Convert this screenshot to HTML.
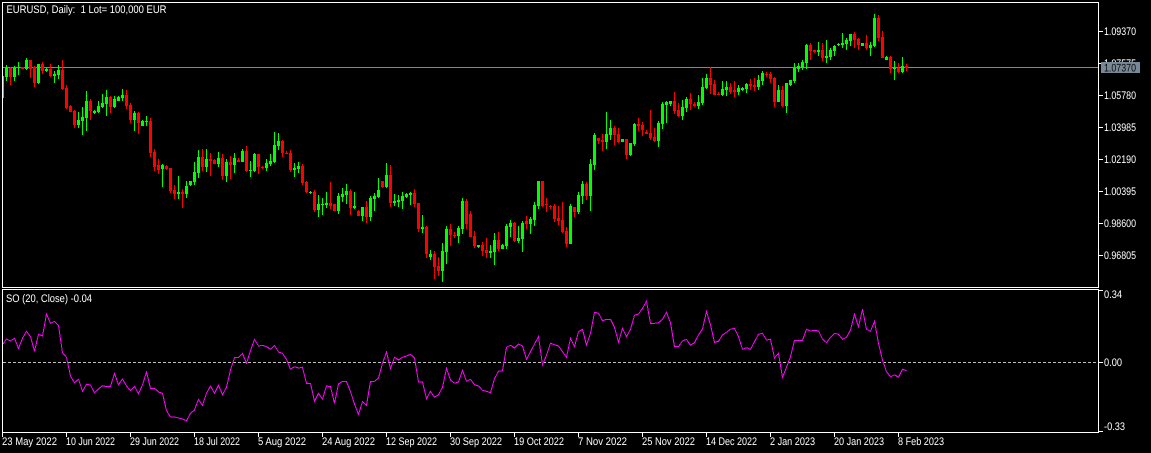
<!DOCTYPE html>
<html lang="en">
<head>
<meta charset="utf-8">
<title>EURUSD Daily</title>
<style>
html,body{margin:0;padding:0;background:#000;width:1151px;height:453px;overflow:hidden}
svg{display:block}
text{font-family:"Liberation Sans",Arial,sans-serif;font-size:11px;fill:#fff;white-space:pre;text-rendering:geometricPrecision}
</style>
</head>
<body>
<svg xmlns="http://www.w3.org/2000/svg" width="1151" height="453" viewBox="0 0 1151 453">
<rect width="1151" height="453" fill="#000"/>
<rect x="3" y="67" width="1095" height="1" fill="#778899"/>
<path id="gw" fill="#00ff00" shape-rendering="crispEdges"/>
<path id="rw" fill="#ff0000" shape-rendering="crispEdges"/>
<line x1="3" y1="362.5" x2="1098" y2="362.5" stroke="#c0c0c0" stroke-width="1" stroke-dasharray="3 2" shape-rendering="crispEdges"/>
<polyline id="so" fill="none" stroke="#ff00ff" stroke-width="1" shape-rendering="crispEdges" points=""/>
<g fill="#fff" shape-rendering="crispEdges">
<rect x="2" y="2" width="1097" height="1"/>
<rect x="2" y="287" width="1097" height="1"/>
<rect x="2" y="2" width="1" height="286"/>
<rect x="1098" y="2" width="1" height="286"/>
<rect x="2" y="289" width="1097" height="1"/>
<rect x="2" y="432" width="1097" height="1"/>
<rect x="2" y="289" width="1" height="144"/>
<rect x="1098" y="289" width="1" height="144"/>
<rect x="1099" y="31" width="4" height="1"/>
<rect x="1099" y="63" width="4" height="1"/>
<rect x="1099" y="95" width="4" height="1"/>
<rect x="1099" y="127" width="4" height="1"/>
<rect x="1099" y="159" width="4" height="1"/>
<rect x="1099" y="191" width="4" height="1"/>
<rect x="1099" y="223" width="4" height="1"/>
<rect x="1099" y="255" width="4" height="1"/>
<rect x="1099" y="290" width="4" height="1"/>
<rect x="1099" y="362" width="4" height="1"/>
<rect x="1099" y="431" width="4" height="1"/>
<rect x="2" y="433" width="1" height="4"/>
<rect x="66" y="433" width="1" height="4"/>
<rect x="130" y="433" width="1" height="4"/>
<rect x="194" y="433" width="1" height="4"/>
<rect x="258" y="433" width="1" height="4"/>
<rect x="322" y="433" width="1" height="4"/>
<rect x="386" y="433" width="1" height="4"/>
<rect x="450" y="433" width="1" height="4"/>
<rect x="514" y="433" width="1" height="4"/>
<rect x="578" y="433" width="1" height="4"/>
<rect x="642" y="433" width="1" height="4"/>
<rect x="706" y="433" width="1" height="4"/>
<rect x="770" y="433" width="1" height="4"/>
<rect x="834" y="433" width="1" height="4"/>
<rect x="898" y="433" width="1" height="4"/>
</g>
<text x="6.5" y="13" textLength="160" lengthAdjust="spacingAndGlyphs" xml:space="preserve">EURUSD, Daily:  1 Lot= 100,000 EUR</text>
<text x="6" y="302" textLength="86" lengthAdjust="spacingAndGlyphs">SO (20, Close) -0.04</text>
<g>
<text x="1104" y="35" textLength="32" lengthAdjust="spacingAndGlyphs">1.09370</text>
<text x="1104" y="67" textLength="32" lengthAdjust="spacingAndGlyphs">1.07575</text>
<text x="1104" y="99" textLength="32" lengthAdjust="spacingAndGlyphs">1.05780</text>
<text x="1104" y="131" textLength="32" lengthAdjust="spacingAndGlyphs">1.03985</text>
<text x="1104" y="163" textLength="32" lengthAdjust="spacingAndGlyphs">1.02190</text>
<text x="1104" y="195" textLength="32" lengthAdjust="spacingAndGlyphs">1.00395</text>
<text x="1104" y="227" textLength="32" lengthAdjust="spacingAndGlyphs">0.98600</text>
<text x="1104" y="259" textLength="32" lengthAdjust="spacingAndGlyphs">0.96805</text>
<text x="1104" y="298" textLength="18" lengthAdjust="spacingAndGlyphs">0.34</text>
<text x="1104" y="366" textLength="18" lengthAdjust="spacingAndGlyphs">0.00</text>
<text x="1104" y="430" textLength="21" lengthAdjust="spacingAndGlyphs">-0.33</text>
</g>
<rect x="1101" y="62" width="39" height="11" fill="#778899" shape-rendering="crispEdges"/>
<text x="1104" y="71.5" textLength="32" lengthAdjust="spacingAndGlyphs" style="fill:#0c0c0c">1.07370</text>
<g>
<text x="2" y="445" textLength="55" lengthAdjust="spacingAndGlyphs">23 May 2022</text>
<text x="66" y="445" textLength="49" lengthAdjust="spacingAndGlyphs">10 Jun 2022</text>
<text x="130" y="445" textLength="49" lengthAdjust="spacingAndGlyphs">29 Jun 2022</text>
<text x="194" y="445" textLength="46" lengthAdjust="spacingAndGlyphs">18 Jul 2022</text>
<text x="258" y="445" textLength="48" lengthAdjust="spacingAndGlyphs">5 Aug 2022</text>
<text x="322" y="445" textLength="53" lengthAdjust="spacingAndGlyphs">24 Aug 2022</text>
<text x="386" y="445" textLength="51" lengthAdjust="spacingAndGlyphs">12 Sep 2022</text>
<text x="450" y="445" textLength="52" lengthAdjust="spacingAndGlyphs">30 Sep 2022</text>
<text x="514" y="445" textLength="50" lengthAdjust="spacingAndGlyphs">19 Oct 2022</text>
<text x="578" y="445" textLength="49" lengthAdjust="spacingAndGlyphs">7 Nov 2022</text>
<text x="642" y="445" textLength="53" lengthAdjust="spacingAndGlyphs">25 Nov 2022</text>
<text x="706" y="445" textLength="51" lengthAdjust="spacingAndGlyphs">14 Dec 2022</text>
<text x="770" y="445" textLength="45" lengthAdjust="spacingAndGlyphs">2 Jan 2023</text>
<text x="834" y="445" textLength="50" lengthAdjust="spacingAndGlyphs">20 Jan 2023</text>
<text x="898" y="445" textLength="46" lengthAdjust="spacingAndGlyphs">8 Feb 2023</text>
</g>
</svg>
<script>
(function(){
var segs=[
[6,0,"g196,204,231,243 r201,204,231,255 g198,204,231,243 g186,201,205,225 r201,201,207,207 g174,180,207,210 r180,180,207,234 r198,201,249,261 g192,192,249,252 r186,192,213,222 g204,207,213,216 r192,207,228,231 g213,222,228,249 g195,210,225,237 r180,210,267,270 r255,264,324,327 r315,318,336,336 r330,333,375,384 g336,360,375,384 g321,351,363,405 g273,303,354,393 r297,303,333,360 g330,333,339,342 g303,318,336,339 g282,309,321,324 g270,291,312,348 r288,291,321,339 g288,297,321,324 g288,291,303,303 g267,285,294,303 r270,285,318,327 r309,315,360,369 g333,339,360,393 r336,339,369,402 g360,363,378,378 g348,363,366,378 r354,363,459,471"],
[154,120,"r87,96,141,153 r117,135,150,162 g132,135,147,201 r135,138,147,150 r144,144,213,219 r195,210,222,237 g168,216,222,237 r207,216,222,264 g183,198,222,234 g183,183,195,198 g126,156,186,195 g90,111,159,174 r87,111,141,153 g87,117,141,156 r99,117,123,168 r117,120,132,132 g96,114,132,141 r102,114,168,180 g117,126,168,186 r108,126,135,177 g99,114,135,159 r114,120,126,126 g87,93,126,126 r78,93,153,156 g123,150,153,171 g99,102,153,156 r102,102,141,162 r138,141,144,148 g117,129,144,153 g102,123,132,138 g36,75,126,129 g39,63,78,90 r60,63,99,111 r93,99,102,102 r90,99,150,156 g129,144,150,171 g126,138,147,159"],
[302,100,"r192,198,249,255 r243,246,276,279 g273,276,279,282 r270,276,330,336 g285,312,330,351 g294,312,315,345 g276,309,315,324 r246,309,318,327 r312,312,333,333 g279,288,333,342 g264,282,291,306 g252,273,285,312 r267,273,324,345 g276,318,324,327 r330,333,348,348 g321,321,348,363 r303,321,351,369 g288,294,351,363 g279,288,297,333 g234,270,291,294 r243,243,261,264 g189,225,261,264 r195,225,309,321 g282,303,309,318 g285,300,306,321 g276,288,303,327 g279,282,291,294 g276,279,285,315 r267,279,312,321 r309,309,387,396 g345,381,387,399 r378,381,462,474 g450,462,471,480 r453,462,501,537 r471,498,513,528 g429,453,513,546 g378,387,456,492 r372,387,405,438 r396,405,408,414 g378,384,408,429 g294,303,387,402 r297,303,372,387 r333,342,411,411 r393,408,438,444 g435,435,441,444 r426,435,453,468 r414,450,459,474 g435,453,459,474 g399,420,456,495 r396,420,447,453 g432,435,447,447 g372,378,438,447 g360,369,381,411 r366,369,423,426 g378,414,423,429 g363,369,417,456 r348,363,372,387 g351,357,372,402 g306,315,360,378 g243,243,318,327 r243,243,318,321 r294,312,315,336 r315,318,321,327 r312,318,357,366 r318,354,363,375 r306,360,396,399 r381,393,432,441 g312,318,432,432 r321,321,336,351 g276,285,336,342 g243,252,288,312 r246,252,288,300 g177,192,288,333 g99,105,195,210 r114,114,123,132"],
[602,0,"r402,420,426,453 g336,402,426,447 g360,384,405,420 r378,384,405,435 r384,402,426,429 g417,417,426,426 r417,417,465,477 g429,429,465,468 g369,372,432,438 r354,372,378,393 r366,375,390,408 r390,396,402,402 r330,399,414,420 r384,411,423,426 g363,369,423,441 g306,312,372,387 g303,306,315,369 g303,303,312,318 r276,303,333,342 r309,330,348,351 g300,321,348,360 g291,297,324,336 r279,297,312,330 r306,312,318,321 g285,306,318,327 g234,261,309,315 g222,234,264,267 r201,234,255,282 r240,252,285,285 r276,282,285,285 g243,267,285,288 g243,261,270,288 r249,261,276,282 r243,270,276,291 g255,264,276,285 g261,264,270,273 g249,252,267,279 r237,252,258,270 r234,255,261,273 g225,240,261,270 g213,219,243,255 r216,222,225,231 r216,222,237,249 r231,234,306,321 g255,270,306,306 r258,270,318,321 g249,249,318,339 g240,240,255,258 g189,204,243,249 g189,198,207,216 g180,186,204,210 g132,135,189,207 r129,135,153,180 r150,150,156,159 g126,150,156,168 r129,150,174,183 g120,168,174,189 g144,150,171,180 g135,138,153,168 g129,132,135,138 g99,129,135,144 g114,120,132,150 g102,102,123,138 r96,102,120,144 r114,117,135,150 g129,129,138,138 r105,129,144,150 g126,135,144,168 g42,54,138,141 r45,54,114,123 r93,111,174,174 g168,171,180,180 r168,171,207,219 g183,204,207,240 r189,204,216,219 g171,198,216,219 r192,198,204,213"]
];
var d={g:"M3 76h1v22h-1z",r:""};
segs.forEach(function(s){
  s[2].split(" ").forEach(function(c,i){
    var k=c.charAt(0),v=c.slice(1).split(",").map(function(n){return s[1]+Math.round(n/3);});
    var x=s[0]+4*i;
    d[k]+="M"+x+" "+v[0]+"h1v"+Math.max(v[3]-v[0],1)+"h-1z";
    d[k]+="M"+(x-1)+" "+v[1]+"h3v"+Math.max(v[2]-v[1],1)+"h-3z";
  });
});
document.getElementById("gw").setAttribute("d",d.g);
document.getElementById("rw").setAttribute("d",d.r);
var so=[177,183,175,205,175,154,170,214,163,168,102,130,124,136,218,232,288,308,298,334,313,315,338,327,317,320,319,280,314,297,318,332,319,341,315,276,325,325,336,340,392,411,411,414,417,422,400,390,358,376,340,318,340,316,344,322,270,233,232,220,250,212,178,198,196,200,208,196,216,220,238,268,260,264,262,310,310,364,340,357,318,320,370,312,304,305,335,372,403,365,376,304,304,294,
250,216,266,232,240,232,228,223,234,306,306,356,334,352,344,322,265,300,310,306,271,304,298,314,318,331,334,338,296,274,272,202,196,204,192,198,238,215,192,170,254,226,190,194,198,215,232,175,200,155,148,196,160,97,100,122,118,118,142,187,145,170,148,106,102,85,64,130,130,128,118,97,128,200,200,183,178,196,188,165,147,94,135,187,184,165,157,148,145,170,208,203,208,185,163,
160,180,178,234,220,292,262,230,181,181,181,148,153,151,153,177,188,172,160,163,178,172,150,103,140,88,148,154,124,190,240,275,290,284,292,268,272];
var pts=["3,344"];
so.forEach(function(v,i){pts.push((6.5+4*i)+","+(280+v/3).toFixed(1));});
document.getElementById("so").setAttribute("points",pts.join(" "));
})();
</script>
</body>
</html>
